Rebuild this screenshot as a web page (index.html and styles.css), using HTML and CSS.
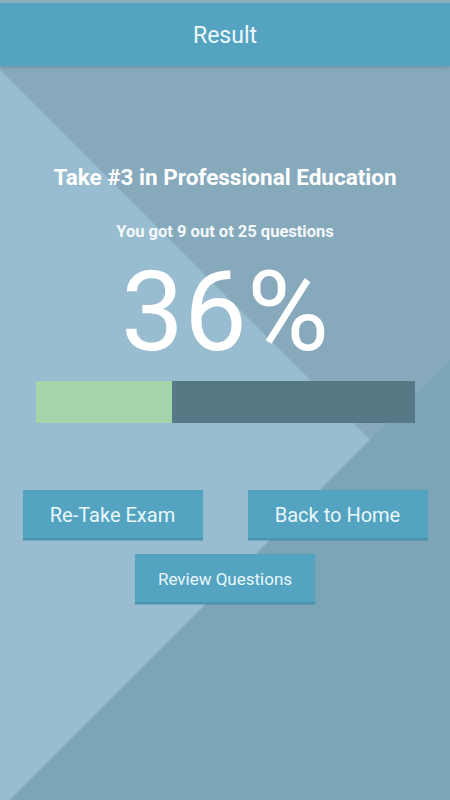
FILE: index.html
```html
<!DOCTYPE html>
<html>
<head>
<meta charset="utf-8">
<link rel="stylesheet" href="styles.css">
</head>
<body>
<header class="topbar"><span class="topbar-title">Result</span></header>
<main class="result">
  <h1 class="result-title">Take #3 in Professional Education</h1>
  <p class="result-sub">You got 9 out ot 25 questions</p>
  <div class="result-percent">36%</div>
  <div class="progress"><div class="progress-fill" style="width:36%"></div></div>
  <div class="actions">
    <button class="btn btn-lg">Re-Take Exam</button>
    <button class="btn btn-lg">Back to Home</button>
  </div>
  <div class="actions actions-second">
    <button class="btn btn-sm">Review Questions</button>
  </div>
</main>
</body>
</html>
```
FILE: styles.css
```css
html, body {
  margin: 0;
  padding: 0;
}
body {
  width: 450px;
  height: 800px;
  overflow: hidden;
  font-family: Roboto, "Liberation Sans", sans-serif;
  color: #fff;
  background-color: #86aabc;
  background-image: url("data:image/svg+xml;utf8,<svg xmlns='http://www.w3.org/2000/svg' width='450' height='800' viewBox='0 0 450 800'><polygon points='0,70 370,440 0,810' fill='%2399bdd0'/><polygon points='452,358 452,802 8,802' fill='%237aa6b7'/></svg>");
  background-repeat: no-repeat;
  background-size: 450px 800px;
}
.topbar {
  border-top: 3px solid #8aafbd;
  height: 63px;
  background: #53a3c1;
  display: flex;
  align-items: center;
  justify-content: center;
  box-shadow: 0 1px 3px rgba(60, 100, 120, 0.35);
}
.topbar-title {
  font-size: 23px;
  color: #eef8fb;
  font-weight: 400;
  padding-top: 2px;
}
.result {
  display: flex;
  flex-direction: column;
  align-items: center;
}
.result-title {
  margin: 98px 0 0;
  font-size: 22.5px;
  line-height: 26px;
  font-weight: 700;
}
.result-sub {
  margin: 32px 0 0;
  font-size: 16.5px;
  line-height: 20px;
  font-weight: 700;
  color: #f4f8fa;
}
.result-percent {
  margin-top: 14px;
  font-size: 112px;
  line-height: 112px;
  font-weight: 400;
}
.progress {
  margin-top: 13px;
  width: 379px;
  height: 42px;
  background: #577986;
  display: flex;
}
.progress-fill {
  height: 100%;
  background: #a3d4aa;
}
.actions {
  margin-top: 67px;
  display: flex;
  justify-content: center;
  gap: 45px;
}
.actions-second {
  margin-top: 14px;
}
.btn {
  width: 180px;
  height: 50px;
  border: 0;
  border-bottom: 2px solid #4a94b3;
  background: #53a3c1;
  color: #eaf7fb;
  font-family: Roboto, "Liberation Sans", sans-serif;
  padding: 2px 0 0;
  box-shadow: 0 1px 1px rgba(60, 100, 120, 0.25);
}
.btn-lg {
  font-size: 20px;
}
.btn-sm {
  font-size: 17px;
}
```
